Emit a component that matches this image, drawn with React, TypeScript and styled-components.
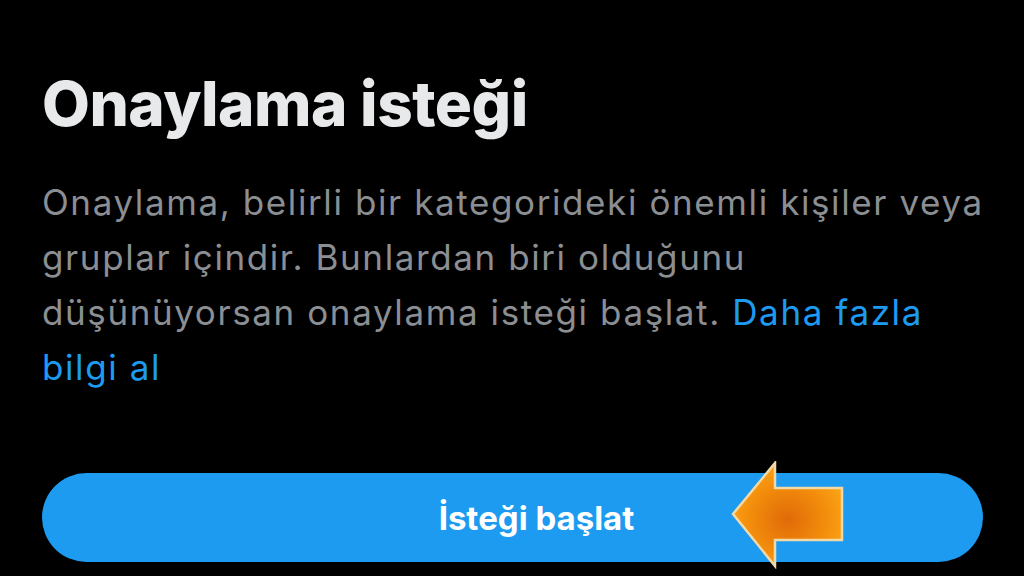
import React from "react";
import styled, { createGlobalStyle } from "styled-components";

const GlobalStyle = createGlobalStyle`
  html, body {
    margin: 0;
    padding: 0;
    background: #000;
  }
  body {
    font-family: Inter, "Noto Sans", "DejaVu Sans", sans-serif;
  }
`;

const Page = styled.div`
  width: 1024px;
  height: 576px;
  overflow: hidden;
  background: #000;
  box-sizing: border-box;
  padding: 66px 41px 0 42px;
  display: flex;
  flex-direction: column;
`;

const Title = styled.h1`
  margin: 0;
  font-size: 62px;
  line-height: 76px;
  font-weight: 800;
  color: #e7e9ea;
  letter-spacing: -0.5px;
`;

const Description = styled.p`
  margin: 33px 0 0;
  font-size: 35px;
  line-height: 55px;
  font-weight: 400;
  letter-spacing: 1.6px;
  color: #8b8e92;
  white-space: nowrap;
`;

const Link = styled.a`
  color: #1d9bf0;
  text-decoration: none;
`;

const ButtonWrap = styled.div`
  position: relative;
  margin-top: 78px;
`;

const StartButton = styled.button`
  width: 100%;
  height: 89px;
  padding: 0 0 0 48px;
  border: none;
  border-radius: 45px;
  background: #1d9bf0;
  color: #fff;
  font-family: inherit;
  font-size: 33px;
  font-weight: 700;
  cursor: pointer;
`;

const Arrow = styled.svg`
  position: absolute;
  left: 689px;
  top: -12px;
  width: 114px;
  height: 108px;
  pointer-events: none;
`;

export default function App() {
  return (
    <>
      <GlobalStyle />
      <Page>
        <Title>Onaylama isteği</Title>
        <Description>
          Onaylama, belirli bir kategorideki önemli kişiler veya
          <br />
          gruplar içindir. Bunlardan biri olduğunu
          <br />
          düşünüyorsan onaylama isteği başlat. <Link href="#">Daha fazla</Link>
          <br />
          <Link href="#">bilgi al</Link>
        </Description>
        <ButtonWrap>
          <StartButton>İsteği başlat</StartButton>
          <Arrow viewBox="0 0 114 108">
            <defs>
              <radialGradient id="ag" cx="0.5" cy="0.55" r="0.65">
                <stop offset="0" stopColor="#e06a08" />
                <stop offset="0.55" stopColor="#f38e0c" />
                <stop offset="1" stopColor="#ffac1a" />
              </radialGradient>
            </defs>
            <path
              d="M2 53 L44 2 L44 27 L111 27 L111 79 L44 79 L44 105 Z"
              fill="url(#ag)"
              stroke="#f3d9a6"
              strokeWidth="2.5"
              strokeLinejoin="miter"
            />
          </Arrow>
        </ButtonWrap>
      </Page>
    </>
  );
}
